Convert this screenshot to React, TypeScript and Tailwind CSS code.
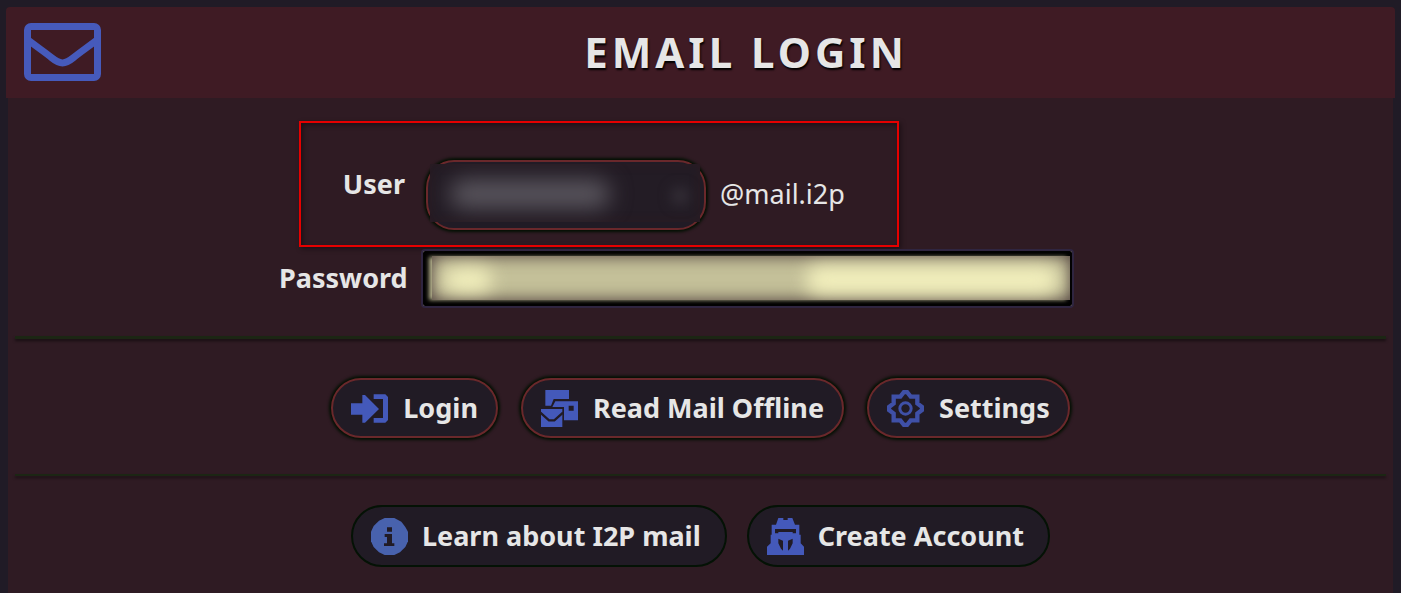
import { useState } from "react";
import type { ReactNode } from "react";

// --- Icons ---
const EnvelopeIcon = () => (
  <svg viewBox="0 0 77 58" className="w-[77px] h-[58px] shrink-0" fill="none" stroke="#465abb" strokeWidth="7">
    <rect x="3.500" y="3.500" width="70" height="51" rx="3.500" />
    <path d="M4 17C16 26 22 30 28 35C36 41.500 41 41.500 49 35C55 30 61 26 73 17" />
  </svg>
);

const LoginIcon = () => (
  <svg viewBox="0 0 111 111" className="w-[37px] h-[37px] shrink-0" fill="#4459ba">
    <path d="M0 40H34V15H42L84 57L42 98H34V74H0Z" />
    <path d="M68 13H103L111 21V90L103 98H68V84H96V27H68Z" />
  </svg>
);

const OfflineIcon = () => (
  <svg viewBox="0 0 111 111" className="w-[37px] h-[37px] shrink-0" fill="#4459ba">
    <path d="M13 0H84V27H38L30 47H13Z" />
    <path fillRule="evenodd" d="M43 34H111V91H69V51H34ZM83 47V62H98V47Z" />
    <path d="M0 57H64V111H0Z" />
    <path d="M-2 68L24 91H40L66 68" fill="none" stroke="#211b25" strokeWidth="7" />
  </svg>
);

const GearIcon = () => (
  <svg viewBox="0 0 111 111" className="w-[37px] h-[37px] shrink-0" fill="none" stroke="#3f50a7" strokeWidth="13">
    <path d="M51 6H60L71 20H91V40L105 51V60L91 71V91H71L60 105H51L40 91H20V71L6 60V51L20 40V20H40Z" />
    <circle cx="55.500" cy="55.500" r="17" strokeWidth="9" />
  </svg>
);

const InfoIcon = () => (
  <svg viewBox="0 0 111 111" className="w-[37px] h-[37px] shrink-0">
    <path
      d="M41 0H70L91 11L103 27L111 41V70L103 87L87 103L70 111H41L24 103L8 87L0 70V41L8 24L24 8Z"
      fill="#4862ad"
    />
    <path d="M48 28H63V41H48ZM41 48H63V76H70V84H39V76H48V57H41Z" fill="#211b25" />
  </svg>
);

const AgentIcon = () => (
  <svg viewBox="0 0 111 111" className="w-[37px] h-[37px] shrink-0" fill="#4459ba">
    <path d="M34 0H49V6H62V0H76L84 20H97V33H14V20H27Z" />
    <path d="M14 33H24V46H34V42H77V46H87V33H97V50H101V76L111 86V111H0V86L11 76V50H14Z" />
    <path d="M34 62L48 68V98L42 92L34 76ZM77 62L63 68V98L69 92L77 76Z" fill="#211b25" />
  </svg>
);

interface PillProps {
  icon: ReactNode;
  label: string;
}

const FormButton = ({ icon, label }: PillProps) => (
  <button
    type="button"
    className="flex items-center gap-[15px] h-15 px-[18px] rounded-[30px] border-2 border-[#6a282b] bg-[#211b25] shadow-[0_0_3px_2px_#031003] text-[27px] leading-9 font-bold whitespace-nowrap"
  >
    {icon}
    {label}
  </button>
);

const LinkButton = ({ icon, label }: PillProps) => (
  <a
    href="#"
    className="flex items-center gap-3.5 h-[62px] pl-[18px] pr-6 rounded-[31px] border-2 border-[#041205] bg-[#211b25] text-[27px] leading-9 font-bold whitespace-nowrap"
  >
    {icon}
    {label}
  </a>
);

export default function App() {
  const [user, setUser] = useState("");
  const [password, setPassword] = useState("");

  return (
    <main className="min-h-screen bg-[#201b26] px-1.5 pt-[7px] flex flex-col font-['Noto_Sans',sans-serif] text-[#e6e6e6]">
      <header className="h-[91px] pl-[18px] pr-1 pb-0.5 flex items-center rounded-t bg-[#3f1b24]">
        <EnvelopeIcon />
        <h1 className="flex-1 text-center uppercase text-[42px] leading-none font-bold tracking-[4px] [text-shadow:1px_2px_2px_#000]">
          Email Login
        </h1>
      </header>

      <section className="mx-0.5 flex-1 px-[7px] bg-[#2f1b23]">
        <form onSubmit={(e) => e.preventDefault()}>
          <div className="flex justify-center pt-[23px] pr-12">
            <div className="grid grid-cols-[126px_653px] gap-x-4 gap-y-0.5 items-center">
              <div className="relative col-span-2 grid grid-cols-subgrid items-center h-[126px] pt-[22px]">
                <label htmlFor="user" className="pb-[22px] text-right text-[27px] leading-9 font-bold">
                  User
                </label>
                <div className="flex items-center gap-3.5 pl-[5px]">
                  <div className="relative w-[280px] h-[70px]">
                    <input
                      id="user"
                      type="text"
                      value={user}
                      onChange={(e) => setUser(e.target.value)}
                      className="w-full h-full px-5 rounded-[28px] border-2 border-[#6a282b] bg-[#211b25] shadow-[0_0_3px_2px_#031003] text-[27px] outline-none"
                    />
                    {/* obscured name */}
                    <div className="absolute top-1 bottom-2 left-1 right-1.5 overflow-hidden pointer-events-none bg-[#231c25] shadow-[inset_0_0_10px_#2b1b22]">
                      <div className="absolute left-5 top-4 w-[160px] h-7 rounded-full bg-[#5b575f] blur-[11px]" />
                      <div className="absolute right-3 top-6 w-4 h-4 rounded-full bg-[#39343c] blur-[7px]" />
                    </div>
                  </div>
                  <span className="pb-0.5 text-[27px] leading-9">@mail.i2p</span>
                </div>
                {/* highlight frame */}
                <div className="absolute inset-y-0 left-5 w-[600px] border-2 border-[#e60000] pointer-events-none shadow-[2px_2px_5px_#00000066,inset_2px_2px_5px_#00000066]" />
              </div>

              <label htmlFor="password" className="pb-0.5 text-right text-[27px] leading-9 font-bold whitespace-nowrap">
                Password
              </label>
              <div className="relative h-[59px]">
                <input
                  id="password"
                  type="password"
                  value={password}
                  onChange={(e) => setPassword(e.target.value)}
                  className="w-full h-full px-3 rounded border-2 border-[#2f2540] bg-[#b9b48f] shadow-[inset_0_0_4px_6px_#000] outline-none"
                />
                <div className="absolute top-[7px] bottom-2 left-[11px] right-1 overflow-hidden pointer-events-none bg-[#c4c099] shadow-[inset_0_0_16px_#4a3a3a]">
                  <div className="absolute left-3 top-3 w-12 h-6 rounded-full bg-[#f3f0bd] blur-[9px]" />
                  <div className="absolute left-[374px] right-3 top-2.5 h-7 rounded-full bg-[#f3f0bd] blur-[9px]" />
                </div>
              </div>
            </div>
          </div>

          <hr className="mt-7 h-[3px] border-0 bg-[#1c2614] shadow-[0_2px_3px_#00000080]" />

          <div className="flex justify-center gap-[23px] pt-[39px] pb-9">
            <FormButton icon={<LoginIcon />} label="Login" />
            <FormButton icon={<OfflineIcon />} label="Read Mail Offline" />
            <FormButton icon={<GearIcon />} label="Settings" />
          </div>

          <hr className="h-0.5 border-0 bg-[#1c2614] shadow-[0_2px_3px_#00000080]" />
        </form>

        <nav className="flex justify-center gap-5 pt-[29px] pb-6">
          <LinkButton icon={<InfoIcon />} label="Learn about I2P mail" />
          <LinkButton icon={<AgentIcon />} label="Create Account" />
        </nav>
      </section>
    </main>
  );
}
